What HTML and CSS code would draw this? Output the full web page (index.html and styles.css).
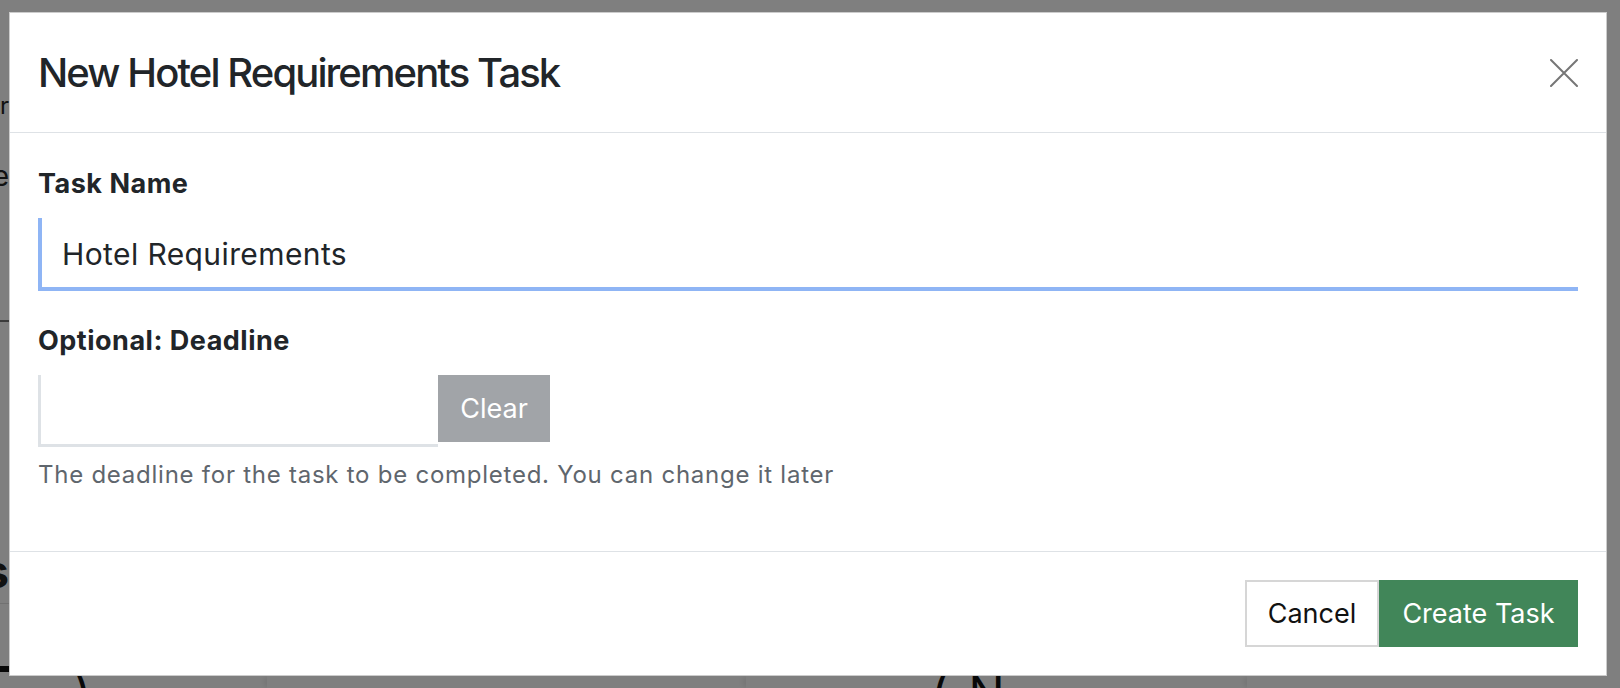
FILE: index.html
```html
<!DOCTYPE html>
<html lang="en">
<head>
    <meta charset="UTF-8">
    <meta name="viewport" content="width=device-width, initial-scale=1.0">
    <title>New Hotel Requirements Task</title>
    <link rel="stylesheet" href="styles.css">
</head>
<body>
    <!-- page behind the dialog, mostly hidden -->
    <div class="page">
        <div class="page-top">
            <div class="page-edge">
                <div class="edge-word first"><span>Organizer</span></div>
                <div class="edge-word second"><span>Type</span></div>
                <div class="edge-rule"></div>
                <div class="edge-heading"><span>Hotels</span></div>
                <div class="edge-rule light"></div>
                <div class="edge-bar"></div>
            </div>
        </div>
        <div class="page-cards">
            <div class="card card-one"><span class="card-glyph">)</span></div>
            <div class="card card-two"></div>
            <div class="card card-three"><span class="card-glyph">(N</span></div>
            <div class="card card-four"></div>
        </div>
    </div>

    <div class="backdrop"></div>

    <div class="modal">
        <div class="modal-header">
            <h5 class="modal-title">New Hotel Requirements Task</h5>
            <button type="button" class="close-btn" aria-label="Close">
                <svg width="28" height="28" viewBox="0 0 28 28">
                    <path d="M1 1 L27 27 M27 1 L1 27" stroke="#767676" stroke-width="2" fill="none" stroke-linecap="round"/>
                </svg>
            </button>
        </div>

        <div class="modal-body">
            <div class="form-group">
                <label for="taskName">Task Name</label>
                <input type="text" id="taskName" class="text-input focused" value="Hotel Requirements">
            </div>

            <div class="form-group last">
                <label for="deadline">Optional: Deadline</label>
                <div class="date-row">
                    <input type="text" id="deadline" class="text-input date-input">
                    <button type="button" class="btn btn-clear">Clear</button>
                </div>
                <div class="help-text">The deadline for the task to be completed. You can change it later</div>
            </div>
        </div>

        <div class="modal-footer">
            <button type="button" class="btn btn-cancel">Cancel</button>
            <button type="button" class="btn btn-create">Create Task</button>
        </div>
    </div>
</body>
</html>
```

FILE: styles.css
```css
body {
    margin: 0;
    font-family: "Inter", "Liberation Sans", sans-serif;
    background-color: #fff;
    color: #212529;
    overflow: hidden;
}

/* background page */
.page {
    height: 688px;
    display: flex;
    flex-direction: column;
}
.page-top {
    height: 676px;
    display: flex;
}
.page-edge {
    width: 9px;
    overflow: hidden;
    padding-top: 91px;
}
.edge-word,
.edge-heading {
    display: flex;
    justify-content: flex-end;
    white-space: nowrap;
    color: #222;
}
.edge-word.first {
    font-size: 24px;
    line-height: 30px;
}
.edge-word.second {
    font-size: 28px;
    line-height: 34px;
    margin-top: 38px;
}
.edge-rule {
    height: 2px;
    background-color: #777;
    margin-top: 127px;
}
.edge-heading {
    font-size: 46px;
    font-weight: 700;
    line-height: 56px;
    margin-top: 221px;
}
.edge-rule.light {
    height: 1px;
    background-color: #e2e2e2;
    margin-top: 4px;
}
.edge-bar {
    height: 6px;
    background-color: #111;
    margin-top: 62px;
}
.page-cards {
    flex: 1;
    display: flex;
    overflow: hidden;
}
.card {
    background-color: #fff;
    position: relative;
}
.card-one { width: 267px; }
.card-two { width: 479px; }
.card-three { width: 501px; }
.card-four { flex: 1; }
.card-two,
.card-three,
.card-four {
    box-shadow: -5px 0 7px -3px rgba(0, 0, 0, 0.18);
}
.card-glyph {
    display: block;
    font-size: 48px;
    line-height: 1;
    color: #111;
    margin-top: -6px;
}
.card-one .card-glyph { padding-left: 74px; }
.card-three .card-glyph { padding-left: 185px; letter-spacing: 20px; }

.backdrop {
    position: fixed;
    top: 0;
    left: 0;
    right: 0;
    bottom: 0;
    background-color: rgba(0, 0, 0, 0.5);
}

/* dialog */
.modal {
    position: fixed;
    top: 12px;
    left: 9px;
    width: 1598px;
    height: 664px;
    box-sizing: border-box;
    background-color: #fff;
    border: 1px solid rgba(0, 0, 0, 0.2);
    display: flex;
    flex-direction: column;
}
.modal-header {
    display: flex;
    align-items: center;
    justify-content: space-between;
    padding: 36px 28px 35px 28px;
    border-bottom: 1px solid #dee2e6;
}
.modal-title {
    margin: 0;
    font-size: 40px;
    font-weight: 500;
    line-height: 48px;
    letter-spacing: -1.9px;
}
.close-btn {
    background: none;
    border: none;
    padding: 0;
    width: 28px;
    height: 28px;
    cursor: pointer;
}
.close-btn svg {
    display: block;
}

.modal-body {
    flex: 1;
    padding: 36px 28px 0 28px;
}
.form-group {
    margin-bottom: 35px;
}
.form-group.last {
    margin-bottom: 0;
}
label {
    display: block;
    font-size: 27px;
    font-weight: 700;
    line-height: 30px;
    letter-spacing: 0.5px;
    margin-bottom: 19px;
}
.text-input {
    display: block;
    width: 100%;
    box-sizing: border-box;
    height: 73px;
    padding: 3px 20px 0 20px;
    border: none;
    border-left: 4px solid #dee2e6;
    border-bottom: 4px solid #dee2e6;
    font-family: inherit;
    font-size: 30px;
    letter-spacing: 0.4px;
    color: #212529;
    background-color: #fff;
    outline: none;
}
.text-input.focused {
    border-left-color: #8fb5f5;
    border-bottom-color: #8fb5f5;
}
.date-row {
    display: flex;
    align-items: flex-start;
}
.date-input {
    width: 400px;
    height: 72px;
    border-left-width: 3px;
    border-bottom-width: 3px;
}
.help-text {
    font-size: 24px;
    line-height: 28px;
    letter-spacing: 0.75px;
    color: #5f666d;
    margin-top: 14px;
}

.btn {
    font-family: inherit;
    font-size: 27px;
    height: 67px;
    border: none;
    cursor: pointer;
}
.btn-clear {
    width: 112px;
    background-color: #a1a4a8;
    color: #fff;
}

.modal-footer {
    display: flex;
    justify-content: flex-end;
    padding: 28px;
    border-top: 1px solid #dee2e6;
}
.btn-cancel {
    width: 134px;
    background-color: #fff;
    color: #111;
    border: 2px solid #d6d6d6;
}
.btn-create {
    width: 199px;
    background-color: #418659;
    color: #fff;
}
```
